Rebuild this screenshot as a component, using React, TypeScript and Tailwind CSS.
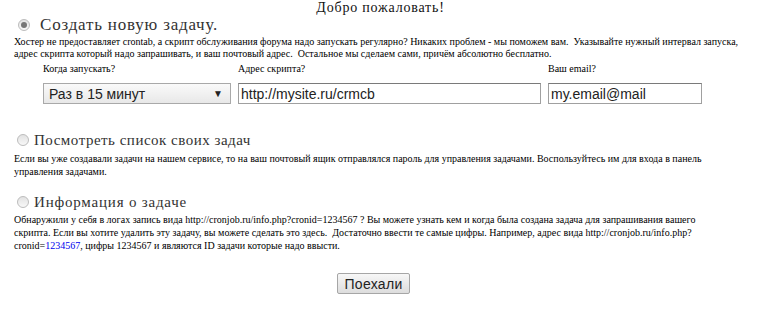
import React from 'react'

const serif = "font-['Liberation_Serif','Times_New_Roman',serif]"
const sans = "font-['Liberation_Sans',Arial,sans-serif]"

const Radio: React.FC<{ checked?: boolean }> = ({ checked }) => (
  <span className="w-[12px] h-[12px] rounded-full border border-[#bcbcbc] bg-gradient-to-b from-[#e2e2e2] to-[#f8f8f8] flex items-center justify-center shrink-0">
    {checked && <span className="w-[6px] h-[6px] rounded-full bg-[#767676]" />}
  </span>
)

const App: React.FC = () => {
  return (
    <div className={`w-[761px] h-[315px] bg-white text-black ${serif} overflow-hidden`}>
      {/* заголовок */}
      <div className="text-center text-[14px] leading-[14px] tracking-[0.8px] pt-[1px] text-[#111]">Добро пожаловать!</div>

      <div className="px-[14px]">
        {/* создать задачу */}
        <div className="flex items-center gap-[10px] pl-[4px] mt-[1px]">
          <Radio checked />
          <span className={`${serif} text-[17px] leading-[18px] tracking-[0.8px] text-[#333]`}>Создать новую задачу.</span>
        </div>
        <p className="text-[10px] leading-[12px] mt-[2px]">
          Хостер не предоставляет crontab, а скрипт обслуживания форума надо запускать регулярно? Никаких проблем - мы поможем вам.&nbsp; Указывайте нужный интервал запуска, адрес скрипта который надо запрашивать, и ваш почтовый адрес.&nbsp; Остальное мы сделаем сами, причём абсолютно бесплатно.
        </p>

        <div className="flex gap-[7px] ml-[29px] mt-[3px] text-[10px] leading-[12px]">
          <div className="w-[188px] flex flex-col">
            <span>Когда запускать?</span>
            <div className={`mt-[8px] h-[21px] border border-[#a9a9a9] bg-gradient-to-b from-[#fafafa] to-[#e8e8e8] flex items-center justify-between pl-[5px] pr-[7px] ${sans} text-[14px] text-[#222]`}>
              <span>Раз в 15 минут</span>
              <span className="text-[10px]">▼</span>
            </div>
          </div>
          <div className="w-[303px] flex flex-col">
            <span>Адрес скрипта?</span>
            <div className={`mt-[8px] h-[21px] border border-[#a0a0a0] border-t-[#7a7a7a] bg-white flex items-center pl-[2px] ${sans} text-[14px] text-[#222]`}>
              http://mysite.ru/crmcb
            </div>
          </div>
          <div className="w-[154px] flex flex-col">
            <span>Ваш email?</span>
            <div className={`mt-[8px] h-[21px] border border-[#a0a0a0] border-t-[#7a7a7a] bg-white flex items-center pl-[2px] ${sans} text-[14px] text-[#222]`}>
              my.email@mail
            </div>
          </div>
        </div>

        {/* список задач */}
        <div className="flex items-center gap-[5px] pl-[3px] mt-[27px]">
          <Radio />
          <span className={`${serif} text-[15px] leading-[18px] tracking-[0.5px] text-[#333]`}>Посмотреть список своих задач</span>
        </div>
        <p className="text-[10px] leading-[13px] mt-[3px]">
          Если вы уже создавали задачи на нашем сервисе, то на ваш почтовый ящик отправлялся пароль для управления задачами. Воспользуйтесь им для входа в панель управления задачами.
        </p>

        {/* информация о задаче */}
        <div className="flex items-center gap-[5px] pl-[3px] mt-[15px]">
          <Radio />
          <span className={`${serif} text-[15px] leading-[18px] tracking-[0.8px] text-[#333]`}>Информация о задаче</span>
        </div>
        <p className="text-[10px] leading-[13px] mt-[2px] w-[720px]">
          Обнаружили у себя в логах запись вида http://cronjob.ru/info.php?cronid=1234567 ? Вы можете узнать кем и когда была создана задача для запрашивания вашего скрипта. Если вы хотите удалить эту задачу, вы можете сделать это здесь.&nbsp; Достаточно ввести те самые цифры. Например, адрес вида http://cronjob.ru/info.php?<wbr />cronid=<span className="text-[#0000ee]">1234567</span>, цифры 1234567 и являются ID задачи которые надо ввысти.
        </p>

        <div className="flex justify-center pr-[14px] mt-[21px]">
          <button className={`w-[73px] h-[21px] border border-[#a6a6a6] rounded-[2px] bg-gradient-to-b from-[#f7f7f7] to-[#dddddd] ${sans} text-[14px] text-[#222] tracking-[0.3px]`}>
            Поехали
          </button>
        </div>
      </div>
    </div>
  )
}

export default App
